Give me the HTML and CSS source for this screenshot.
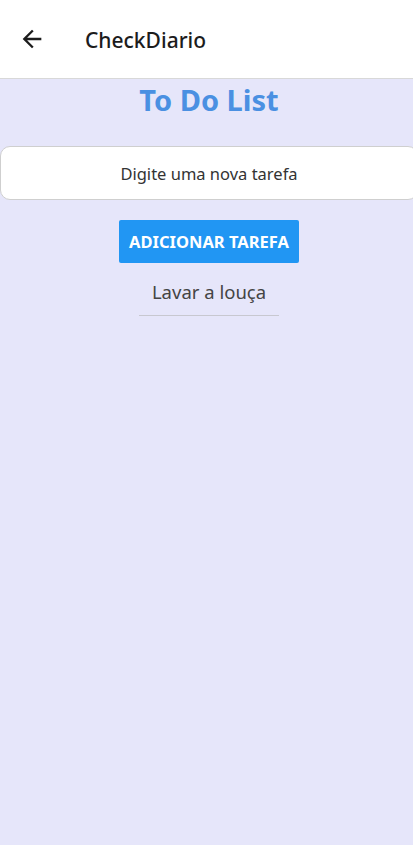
FILE: index.html
```html
<!DOCTYPE html>
<html lang="pt">
<head>
<meta charset="utf-8">
<title>CheckDiario</title>
<link rel="stylesheet" href="styles.css">
</head>
<body>
<header class="appbar">
  <button class="back" aria-label="Voltar">
    <svg viewBox="0 0 24 24" width="28" height="28"><path d="M20 11H7.83l5.59-5.59L12 4l-8 8 8 8 1.41-1.41L7.83 13H20v-2z" fill="#1c1c1c"/></svg>
  </button>
  <h1 class="appbar-title">CheckDiario</h1>
</header>
<main class="content">
  <h2 class="title">To Do List</h2>
  <div class="input-box">Digite uma nova tarefa</div>
  <button class="add">ADICIONAR TAREFA</button>
  <ul class="tasks">
    <li class="task">Lavar a louça</li>
  </ul>
</main>
</body>
</html>
```
FILE: styles.css
```css
html, body {
  margin: 0;
  padding: 0;
  height: 100%;
  overflow: hidden;
}
body {
  font-family: "Noto Sans", "Open Sans", sans-serif;
  background: #e6e6fa;
}
.appbar {
  height: 78px;
  background: #fff;
  border-bottom: 1px solid #d8d8d8;
  display: flex;
  align-items: center;
}
.back {
  border: 0;
  background: none;
  padding: 0;
  margin-left: 18px;
  width: 28px;
  height: 28px;
  display: flex;
}
.appbar-title {
  margin: 2px 0 0 39px;
  font-size: 21px;
  font-weight: 500;
  color: #1c1c1c;
}
.content {
  width: 418px;
  display: flex;
  flex-direction: column;
  align-items: center;
}
.title {
  margin: 4px 0 0;
  font-size: 29px;
  font-weight: 700;
  color: #4a90e2;
  line-height: 34px;
}
.input-box {
  align-self: stretch;
  box-sizing: border-box;
  margin-top: 29px;
  height: 54px;
  background: #fff;
  border: 1px solid #cfcfcf;
  border-radius: 10px;
  display: flex;
  align-items: center;
  justify-content: center;
  font-size: 16.5px;
  color: #333;
}
.add {
  margin-top: 20px;
  width: 180px;
  height: 43px;
  border: 0;
  border-radius: 2px;
  background: #2196f3;
  color: #fff;
  font-family: inherit;
  font-size: 16.5px;
  font-weight: 700;
  padding: 0;
}
.tasks {
  list-style: none;
  margin: 10px 0 0;
  padding: 0;
}
.task {
  width: 140px;
  text-align: center;
  font-size: 18.5px;
  color: #444;
  line-height: 24px;
  padding: 7px 0 11px;
  border-bottom: 1px solid #c8c8d0;
}
```
